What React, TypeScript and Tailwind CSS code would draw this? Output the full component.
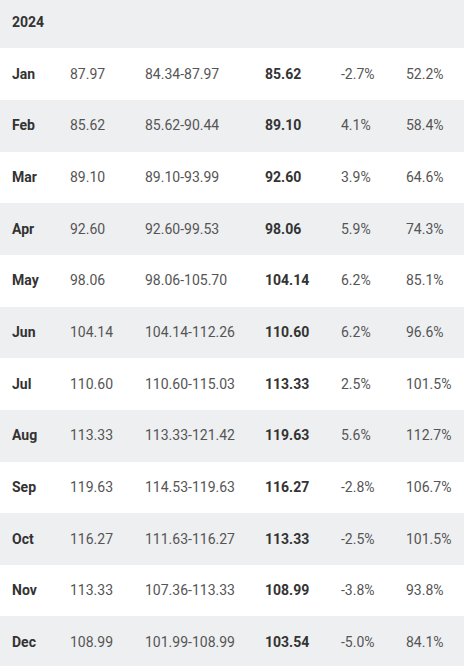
import React from "react";

const rows: [string, string, string, string, string, string][] = [
  ["Jan", "87.97", "84.34-87.97", "85.62", "-2.7%", "52.2%"],
  ["Feb", "85.62", "85.62-90.44", "89.10", "4.1%", "58.4%"],
  ["Mar", "89.10", "89.10-93.99", "92.60", "3.9%", "64.6%"],
  ["Apr", "92.60", "92.60-99.53", "98.06", "5.9%", "74.3%"],
  ["May", "98.06", "98.06-105.70", "104.14", "6.2%", "85.1%"],
  ["Jun", "104.14", "104.14-112.26", "110.60", "6.2%", "96.6%"],
  ["Jul", "110.60", "110.60-115.03", "113.33", "2.5%", "101.5%"],
  ["Aug", "113.33", "113.33-121.42", "119.63", "5.6%", "112.7%"],
  ["Sep", "119.63", "114.53-119.63", "116.27", "-2.8%", "106.7%"],
  ["Oct", "116.27", "111.63-116.27", "113.33", "-2.5%", "101.5%"],
  ["Nov", "113.33", "107.36-113.33", "108.99", "-3.8%", "93.8%"],
  ["Dec", "108.99", "101.99-108.99", "103.54", "-5.0%", "84.1%"],
];

export default function App() {
  return (
    <div
      className="w-[464px] h-[666px] overflow-hidden bg-white text-[14px]"
      style={{ fontFamily: "Roboto, 'Liberation Sans', sans-serif" }}
    >
      <div className="mt-[-3.4px]">
        <div className="h-[51.67px] flex items-center pl-3 bg-[#eeeff1] font-bold text-[#333333]">
          2024
        </div>
        {rows.map((r, i) => (
          <div
            key={r[0]}
            className={`h-[51.67px] grid grid-cols-[58px_75px_120px_76px_65px_1fr] items-center ${
              i % 2 === 0 ? "bg-white" : "bg-[#eeeff1]"
            }`}
          >
            <div className="pl-3 font-bold text-[#333333]">{r[0]}</div>
            <div className="pl-3 text-[#555555]">{r[1]}</div>
            <div className="pl-3 text-[#555555]">{r[2]}</div>
            <div className="pl-3 font-bold text-[#333333]">{r[3]}</div>
            <div className="pl-3 text-[#555555]">{r[4]}</div>
            <div className="pl-3 text-[#555555]">{r[5]}</div>
          </div>
        ))}
      </div>
    </div>
  );
}
